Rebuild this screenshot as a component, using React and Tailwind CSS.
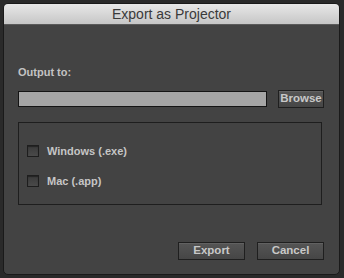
import React from 'react';

const font = { fontFamily: '"Liberation Sans", Arial, sans-serif' };

const Checkbox = ({ label }) => (
  <label className="flex items-center gap-[8px] h-[12px]">
    <span className="w-[12px] h-[12px] border border-[#1e1e1e] bg-gradient-to-b from-[#3a3a3a] to-[#4a4a4a] shadow-[inset_0_1px_1px_rgba(0,0,0,0.4)]" />
    <span className="text-[11px] font-bold text-[#c6c6c6] leading-none">{label}</span>
  </label>
);

const Button = ({ children, className }) => (
  <button
    className={
      'h-[18px] border border-[#1f1f1f] bg-gradient-to-b from-[#555555] to-[#464646] text-[11.5px] font-bold text-[#c8c8c8] leading-none shadow-[inset_0_1px_0_rgba(255,255,255,0.08)] ' +
      className
    }
  >
    {children}
  </button>
);

export default function App() {
  return (
    <div className="w-[344px] h-[278px] bg-[#2a2a2a] pt-[3px] px-[3px] pb-[3px]" style={font}>
      <div className="w-[337px] h-[272px] rounded-[5px] overflow-hidden bg-[#434343] flex flex-col border border-[#1a1a1a]">
        {/* titlebar */}
        <div className="h-[21px] shrink-0 flex items-center justify-center bg-gradient-to-b from-[#e8e8e8] to-[#c6c6c6] border-b border-[#5a5a5a]">
          <span className="text-[14px] text-[#3a3a3a] leading-none">Export as Projector</span>
        </div>

        <div className="flex-1 flex flex-col px-[14px]">
          <div className="mt-[42px] text-[11px] font-bold text-[#c3c3c3] leading-none">Output to:</div>

          <div className="mt-[12px] flex items-center">
            <div className="w-[249px] h-[16px] border border-[#141414] bg-[#a5a5a5]" />
            <Button className="ml-[11px] w-[46px]">Browse</Button>
          </div>

          <div className="mt-[14px] w-[304px] h-[83px] border border-[#1e1e1e] flex flex-col pl-[8px] pt-[22px] gap-[18px]">
            <Checkbox label="Windows (.exe)" />
            <Checkbox label="Mac (.app)" />
          </div>

          <div className="mt-[37px] flex justify-end pr-[1px] gap-[12px]">
            <Button className="w-[67px]">Export</Button>
            <Button className="w-[67px]">Cancel</Button>
          </div>
        </div>
      </div>
    </div>
  );
}
